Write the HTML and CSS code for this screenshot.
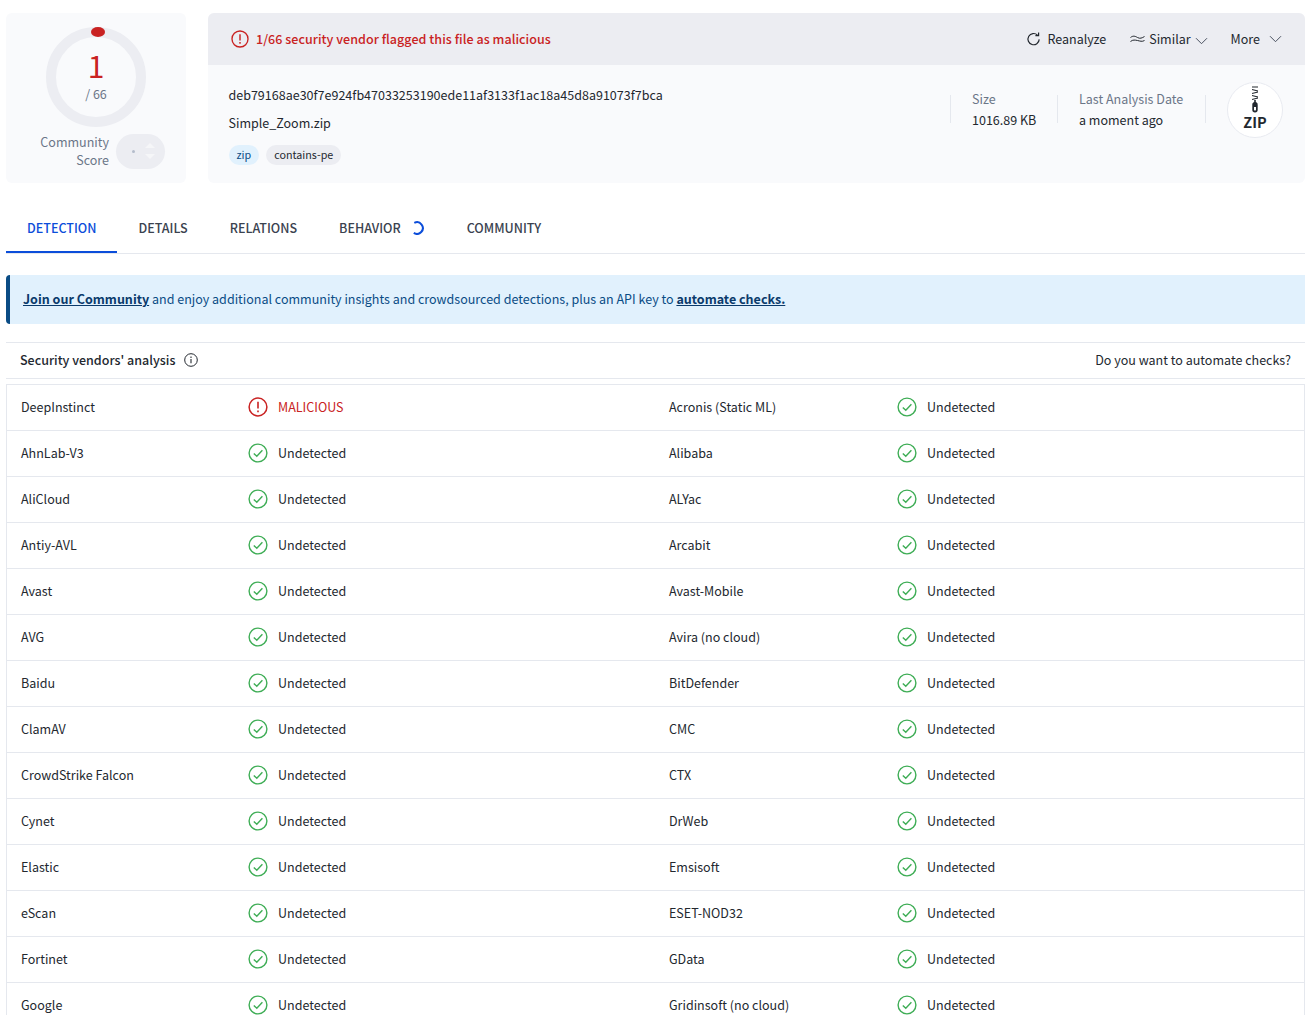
FILE: index.html
```html
<!DOCTYPE html>
<html lang="en">
<head>
<meta charset="utf-8">
<title>VirusTotal</title>
<link rel="stylesheet" href="styles.css">
</head>
<body>
<svg class="defs" width="0" height="0">
  <symbol id="ok" viewBox="0 0 20 20"><circle cx="10" cy="10" r="8.900" fill="none" stroke="#3ead55" stroke-width="1.400"/><path d="M5.800 10.400l3 2.900 5.600-6" fill="none" stroke="#3ead55" stroke-width="1.400"/></symbol>
  <symbol id="bad" viewBox="0 0 20 20"><circle cx="10" cy="10" r="8.900" fill="none" stroke="#c92222" stroke-width="1.500"/><path d="M10 4.800v6.800M10 13.400v1.800" fill="none" stroke="#c92222" stroke-width="1.600"/></symbol>
</svg>
<div class="top">
  <section class="score">
    <div class="ring">
      <span class="dot"></span>
      <div class="num">1</div>
      <div class="of">/ 66</div>
    </div>
    <div class="community">
      <div class="clabel">Community<br>Score</div>
      <div class="vote">
        <span class="vdot"></span>
        <span class="arrows"><i class="up"></i><i class="down"></i></span>
      </div>
    </div>
  </section>
  <section class="card">
    <header class="bar">
      <div class="alert">
        <svg class="alert-ic" width="18" height="18"><use href="#bad"/></svg>
        <span>1/66 security vendor flagged this file as malicious</span>
      </div>
      <nav class="actions">
        <span class="act act-re">
          <svg width="16" height="16" viewBox="0 0 16 16"><path d="M13.200 8.400a5.600 5.600 0 1 1-1.700-4.300" fill="none" stroke="#23282f" stroke-width="1.200"/><path d="M12.600 1.400v3.300H9.400" fill="none" stroke="#23282f" stroke-width="1.200"/></svg>
          Reanalyze</span>
        <span class="act act-si">
          <svg width="15" height="12" viewBox="0 0 15 12"><path d="M.5 4.500C3 2.500 5 3 7.500 4.500S12 5 14.500 3.500M.5 8.500C3 6.500 5 7 7.500 7.500S12 9 14.500 7.500" fill="none" stroke="#23282f" stroke-width="1"/></svg>
          Similar
          <svg class="chev" width="13" height="8" viewBox="0 0 13 8"><path d="M1 1.200l5.500 5.500 5.500-5.500" fill="none" stroke="#4a5260" stroke-width="1"/></svg></span>
        <span class="act act-mo">More
          <svg class="chev-up" width="13" height="8" viewBox="0 0 13 8"><path d="M1 1.200l5.500 5.500 5.500-5.500" fill="none" stroke="#4a5260" stroke-width="1"/></svg></span>
      </nav>
    </header>
    <div class="info">
      <div class="file">
        <div class="hash">deb79168ae30f7e924fb47033253190ede11af3133f1ac18a45d8a91073f7bca</div>
        <div class="name">Simple_Zoom.zip</div>
        <div class="tags"><span class="tag tag-blue">zip</span><span class="tag">contains-pe</span></div>
      </div>
      <div class="meta meta-size"><div class="mlabel">Size</div><div class="mval">1016.89 KB</div></div>
      <div class="meta meta-date"><div class="mlabel">Last Analysis Date</div><div class="mval">a moment ago</div></div>
      <div class="meta-end"></div>
      <div class="zip">
        <svg width="12" height="27" viewBox="0 0 12 27" class="zipper"><path d="M3 1h6M3 3.500l6 1.500M3 7.500l6-1.500M3 9.500l6 1.500M3 13.500l6-1.500" stroke="#23282f" stroke-width="1.100" fill="none"/><rect x="3.300" y="16" width="5.400" height="10.500" rx="2.700" fill="#23282f"/><rect x="5" y="21" width="2" height="3.400" fill="#fff"/><rect x="5.200" y="14" width="1.600" height="3" fill="#23282f"/></svg>
        <span class="zip-text">ZIP</span>
      </div>
    </div>
  </section>
</div>

<nav class="tabs">
  <span class="tab active">DETECTION</span>
  <span class="tab">DETAILS</span>
  <span class="tab">RELATIONS</span>
  <span class="tab tab-beh">BEHAVIOR
    <svg width="14" height="14" viewBox="0 0 14 14"><path d="M2.300 1.900A5.800 5.800 0 1 1 1.800 11.900" fill="none" stroke="#0b4dda" stroke-width="2"/></svg></span>
  <span class="tab">COMMUNITY</span>
</nav>

<div class="banner"><a class="blink">Join our Community</a> and enjoy additional community insights and crowdsourced detections, plus an API key to <a class="blink">automate checks.</a></div>

<div class="head">
  <div class="head-title">Security vendors' analysis
    <svg width="14" height="14" viewBox="0 0 14 14"><circle cx="7" cy="7" r="6.300" fill="none" stroke="#23282f" stroke-width="1"/><path d="M7 6v4.200M7 3.600v1.300" stroke="#23282f" stroke-width="1.100"/></svg></div>
  <div class="head-link">Do you want to automate checks?</div>
</div>

<div class="table">
  <div class="row"><div class="vendor">DeepInstinct</div><div class="res mal"><svg width="20" height="20"><use href="#bad"/></svg>MALICIOUS</div><div class="vendor">Acronis (Static ML)</div><div class="res"><svg width="20" height="20"><use href="#ok"/></svg>Undetected</div></div>
  <div class="row"><div class="vendor">AhnLab-V3</div><div class="res"><svg width="20" height="20"><use href="#ok"/></svg>Undetected</div><div class="vendor">Alibaba</div><div class="res"><svg width="20" height="20"><use href="#ok"/></svg>Undetected</div></div>
  <div class="row"><div class="vendor">AliCloud</div><div class="res"><svg width="20" height="20"><use href="#ok"/></svg>Undetected</div><div class="vendor">ALYac</div><div class="res"><svg width="20" height="20"><use href="#ok"/></svg>Undetected</div></div>
  <div class="row"><div class="vendor">Antiy-AVL</div><div class="res"><svg width="20" height="20"><use href="#ok"/></svg>Undetected</div><div class="vendor">Arcabit</div><div class="res"><svg width="20" height="20"><use href="#ok"/></svg>Undetected</div></div>
  <div class="row"><div class="vendor">Avast</div><div class="res"><svg width="20" height="20"><use href="#ok"/></svg>Undetected</div><div class="vendor">Avast-Mobile</div><div class="res"><svg width="20" height="20"><use href="#ok"/></svg>Undetected</div></div>
  <div class="row"><div class="vendor">AVG</div><div class="res"><svg width="20" height="20"><use href="#ok"/></svg>Undetected</div><div class="vendor">Avira (no cloud)</div><div class="res"><svg width="20" height="20"><use href="#ok"/></svg>Undetected</div></div>
  <div class="row"><div class="vendor">Baidu</div><div class="res"><svg width="20" height="20"><use href="#ok"/></svg>Undetected</div><div class="vendor">BitDefender</div><div class="res"><svg width="20" height="20"><use href="#ok"/></svg>Undetected</div></div>
  <div class="row"><div class="vendor">ClamAV</div><div class="res"><svg width="20" height="20"><use href="#ok"/></svg>Undetected</div><div class="vendor">CMC</div><div class="res"><svg width="20" height="20"><use href="#ok"/></svg>Undetected</div></div>
  <div class="row"><div class="vendor">CrowdStrike Falcon</div><div class="res"><svg width="20" height="20"><use href="#ok"/></svg>Undetected</div><div class="vendor">CTX</div><div class="res"><svg width="20" height="20"><use href="#ok"/></svg>Undetected</div></div>
  <div class="row"><div class="vendor">Cynet</div><div class="res"><svg width="20" height="20"><use href="#ok"/></svg>Undetected</div><div class="vendor">DrWeb</div><div class="res"><svg width="20" height="20"><use href="#ok"/></svg>Undetected</div></div>
  <div class="row"><div class="vendor">Elastic</div><div class="res"><svg width="20" height="20"><use href="#ok"/></svg>Undetected</div><div class="vendor">Emsisoft</div><div class="res"><svg width="20" height="20"><use href="#ok"/></svg>Undetected</div></div>
  <div class="row"><div class="vendor">eScan</div><div class="res"><svg width="20" height="20"><use href="#ok"/></svg>Undetected</div><div class="vendor">ESET-NOD32</div><div class="res"><svg width="20" height="20"><use href="#ok"/></svg>Undetected</div></div>
  <div class="row"><div class="vendor">Fortinet</div><div class="res"><svg width="20" height="20"><use href="#ok"/></svg>Undetected</div><div class="vendor">GData</div><div class="res"><svg width="20" height="20"><use href="#ok"/></svg>Undetected</div></div>
  <div class="row"><div class="vendor">Google</div><div class="res"><svg width="20" height="20"><use href="#ok"/></svg>Undetected</div><div class="vendor">Gridinsoft (no cloud)</div><div class="res"><svg width="20" height="20"><use href="#ok"/></svg>Undetected</div></div>
</div>
</body>
</html>
```
FILE: styles.css
```css
* { box-sizing: border-box; }
html, body { height: 1015px; overflow: hidden; }
body {
  margin: 0;
  padding: 13px 11px 0 6px;
  background: #fff;
  color: #23282f;
  font-family: "Noto Sans CJK SC", "Noto Sans", sans-serif;
  font-size: 12.53px;
  line-height: 20px;
}
.defs { position: absolute; }
svg { display: block; flex: none; }

.top { display: flex; gap: 21.5px; height: 170px; }
.score {
  width: 180px;
  background: #f9fafc;
  border-radius: 6px;
  padding: 14px 0 0 40px;
}
.ring {
  position: relative;
  width: 100px;
  height: 100px;
  border: 10px solid #ecedf2;
  border-radius: 50%;
  text-align: center;
}
.dot {
  position: absolute;
  top: -10px;
  left: 35px;
  width: 14px;
  height: 10px;
  border-radius: 50%;
  background: #c92222;
}
.num { color: #c92222; font-size: 30px; line-height: 26px; margin-top: 15px; }
.of { color: #6b7688; line-height: 20px; margin-top: 6px; }
.community { display: flex; align-items: center; margin: 6px 0 0 -12px; gap: 7px; }
.clabel { color: #6b7688; text-align: right; line-height: 18px; width: 75px; }
.vote {
  width: 49px;
  height: 35px;
  border-radius: 18px;
  background: #ecedf2;
  display: flex;
  align-items: center;
  padding-left: 16px;
  gap: 10px;
}
.vdot { width: 3px; height: 3px; border-radius: 50%; background: #b4bccb; }
.arrows { display: flex; flex-direction: column; gap: 6px; }
.arrows i { display: block; width: 0; height: 0; border-left: 5px solid transparent; border-right: 5px solid transparent; }
.arrows .up { border-bottom: 5px solid #f5f6f8; }
.arrows .down { border-top: 5px solid #f5f6f8; }

.card { flex: 1; background: #f9fafc; border-radius: 6px; overflow: hidden; }
.bar {
  height: 52px;
  background: #ecedf2;
  display: flex;
  align-items: center;
  justify-content: space-between;
  padding: 0 23px 0 23.5px;
}
.alert { display: flex; align-items: center; gap: 7px; color: #c92222; font-weight: 500; letter-spacing: 0.04px; }
.actions { display: flex; align-items: center; }
.act { display: flex; align-items: center; }
.act-re { gap: 5px; margin-right: 24px; }
.act-si { gap: 4px; margin-right: 23px; }
.act-mo { gap: 9px; }
.chev { margin-top: 3px; }
.chev-up { margin-top: -1px; }

.info { display: flex; align-items: flex-start; position: relative; padding: 20px 22px 0 21px; }
.file { flex: 1; }
.name { margin-top: 8px; }
.tags { display: flex; gap: 7px; margin-top: 12px; }
.tag {
  height: 20px;
  line-height: 20px;
  padding: 0 8px;
  font-size: 10.74px;
  border-radius: 10px;
  background: #ecedf2;
}
.tag-blue { background: #e1f1fd; color: #0a4c85; }
.meta { border-left: 1px solid #e5e8ee; height: 28px; padding-left: 21px; margin-top: 10px; }
.meta-size { width: 107px; }
.meta-date { width: 148px; }
.meta-end { border-left: 1px solid #e5e8ee; height: 28px; margin-top: 10px; width: 22px; }
.mlabel { color: #6b7688; margin-top: -6px; }
.mval { margin-top: 1px; white-space: nowrap; }
.zip {
  width: 56px;
  height: 56px;
  margin-top: -3px;
  border-radius: 50%;
  background: #fff;
  border: 1px solid #e8eaf0;
  display: flex;
  flex-direction: column;
  align-items: center;
  padding-top: 3px;
}
.zip-text { font-weight: 700; font-size: 14.5px; line-height: 14px; margin-top: 2px; }

.tabs { display: flex; height: 42px; margin-top: 29px; border-bottom: 1px solid #e5e8ee; }
.tab {
  font-weight: 500;
  padding: 0 21px;
  height: 41px;
  line-height: 32px;
  display: flex;
  gap: 11px;
  align-items: flex-start;
  color: #3a424f;
}
.tab svg { margin-top: 9px; }
.tab-beh { margin-right: -1px; }
.tab.active { color: #0b4dda; border-bottom: 2px solid #0b4dda; }

.banner {
  margin-top: 21px;
  height: 49px;
  line-height: 48px;
  padding-left: 13px;
  background: #e1f1fd;
  border-left: 4px solid #0a4c85;
  border-radius: 4px 0 0 4px;
  color: #0a4c85;
}
.blink { font-weight: 700; text-decoration: underline; color: #0a3a6b; }

.head {
  margin-top: 18px;
  height: 37px;
  border-top: 1px solid #e5e8ee;
  border-bottom: 1px solid #e5e8ee;
  display: flex;
  align-items: center;
  justify-content: space-between;
  padding: 0 14px 2px;
}
.head-title { display: flex; align-items: center; gap: 9px; font-weight: 500; }

.table { margin-top: 5px; border: 1px solid #e5e8ee; border-bottom: 0; }
.row {
  display: grid;
  grid-template-columns: 227px 421px 228px 1fr;
  height: 46px;
  align-items: center;
  border-bottom: 1px solid #e5e8ee;
  padding: 0 0 2px 14px;
}
.res { display: flex; align-items: center; gap: 10px; }
.mal { color: #c92222; }
```
